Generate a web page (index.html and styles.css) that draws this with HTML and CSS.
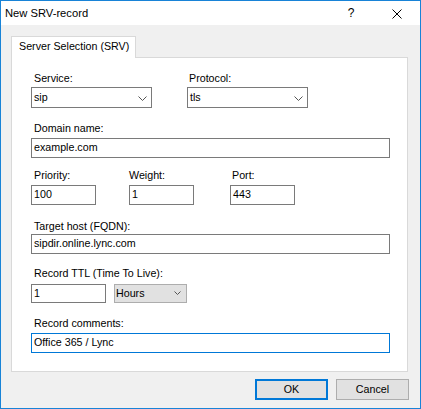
FILE: index.html
```html
<!DOCTYPE html>
<html>
<head>
<meta charset="utf-8">
<title>New SRV-record</title>
<link rel="stylesheet" href="styles.css">
</head>
<body>
<div class="window">
  <div class="titlebar">
    <span class="title">New SRV-record</span>
    <span class="help">?</span>
    <span class="close"><svg width="10" height="10" viewBox="0 0 10 10"><path d="M0.5 0.5L9.5 9.5M9.5 0.5L0.5 9.5" stroke="#000" stroke-width="1" fill="none"/></svg></span>
  </div>
  <div class="content">
    <div class="tab">Server Selection (SRV)</div>
    <div class="panel">
      <div class="group g-service">
        <div class="col w-combo">
          <div class="lbl">Service:</div>
          <div class="combo"><span>sip</span><svg class="chev" width="9" height="5" viewBox="0 0 9 5"><polyline points="0.5,0.5 4.5,4.5 8.5,0.5" stroke="#555" fill="none"/></svg></div>
        </div>
        <div class="col w-combo col-protocol">
          <div class="lbl lbl-2">Protocol:</div>
          <div class="combo"><span>tls</span><svg class="chev" width="9" height="5" viewBox="0 0 9 5"><polyline points="0.5,0.5 4.5,4.5 8.5,0.5" stroke="#555" fill="none"/></svg></div>
        </div>
      </div>
      <div class="group g-domain">
        <div class="col w-full">
          <div class="lbl">Domain name:</div>
          <div class="field">example.com</div>
        </div>
      </div>
      <div class="group g-prio">
        <div class="col w-small">
          <div class="lbl">Priority:</div>
          <div class="field">100</div>
        </div>
        <div class="col w-small col-weight">
          <div class="lbl lbl-0">Weight:</div>
          <div class="field">1</div>
        </div>
        <div class="col w-small col-port">
          <div class="lbl lbl-2">Port:</div>
          <div class="field">443</div>
        </div>
      </div>
      <div class="group g-target">
        <div class="col w-full">
          <div class="lbl">Target host (FQDN):</div>
          <div class="field">sipdir.online.lync.com</div>
        </div>
      </div>
      <div class="group g-ttl">
        <div class="col w-full">
          <div class="lbl">Record TTL (Time To Live):</div>
          <div class="ttl-row">
            <div class="field field-ttl">1</div>
            <div class="combo combo-flat"><span>Hours</span><svg class="chev" width="7" height="4" viewBox="0 0 7 4"><polyline points="0.5,0.5 3.5,3.5 6.5,0.5" stroke="#555" fill="none"/></svg></div>
          </div>
        </div>
      </div>
      <div class="group g-comments">
        <div class="col w-full">
          <div class="lbl">Record comments:</div>
          <div class="field field-focus">Office 365 / Lync</div>
        </div>
      </div>
    </div>
    <div class="buttons">
      <button class="btn btn-default">OK</button>
      <button class="btn">Cancel</button>
    </div>
  </div>
</div>
</body>
</html>
```
FILE: styles.css
```css
html, body {
  margin: 0;
  padding: 0;
}
body {
  font-family: "Liberation Sans", Arial, sans-serif;
  font-size: 10.7px;
  color: #000;
  background: #fff;
}
.window {
  width: 421px;
  height: 409px;
  box-sizing: border-box;
  border: 1px solid #1883d7;
  background: #f0f0f0;
  display: flex;
  flex-direction: column;
}
.titlebar {
  height: 24px;
  background: #fff;
  display: flex;
  align-items: flex-start;
  padding-left: 4px;
}
.title {
  font-size: 11.2px;
  line-height: 24px;
}
.help {
  margin-left: auto;
  width: 12px;
  text-align: center;
  font-size: 12px;
  line-height: 24px;
  margin-right: 35px;
}
.close {
  width: 10px;
  height: 10px;
  margin-top: 8px;
  margin-right: 18px;
  display: flex;
}
.content {
  padding: 11px 0 0 10px;
}
.tab {
  position: relative;
  z-index: 1;
  width: 125px;
  height: 22px;
  box-sizing: border-box;
  border: 1px solid #d9d9d9;
  border-bottom: none;
  background: #fff;
  padding-left: 7px;
  line-height: 19px;
  margin-bottom: -1px;
  white-space: nowrap;
}
.panel {
  width: 397px;
  box-sizing: border-box;
  border: 1px solid #d9d9d9;
  background: #fff;
  padding: 14px 17px 18px 19px;
}
.group {
  display: flex;
}
.col {
  display: flex;
  flex-direction: column;
}
.w-combo { width: 121px; }
.w-full { width: 359px; }
.w-small { width: 65px; }
.col-protocol { margin-left: 35px; }
.col-weight { margin-left: 33px; }
.col-port { margin-left: 36px; }

.lbl {
  height: 13px;
  line-height: 13px;
  padding-left: 3px;
  white-space: nowrap;
}
.lbl-2 { padding-left: 2px; }
.lbl-0 { padding-left: 0; }

.field {
  height: 20px;
  box-sizing: border-box;
  border: 1px solid #7a7a7a;
  background: #fff;
  padding-left: 2px;
  line-height: 17px;
  white-space: nowrap;
}
.field-focus {
  border-color: #0078d7;
}
.combo {
  height: 21px;
  box-sizing: border-box;
  border: 1px solid #7a7a7a;
  background: #fff;
  padding-left: 2px;
  line-height: 18px;
  display: flex;
  justify-content: space-between;
  align-items: flex-start;
}
.combo .chev {
  margin-top: 8px;
  margin-right: 4px;
}
.ttl-row {
  display: flex;
}
.field-ttl {
  width: 75px;
  height: 19px;
  line-height: 16px;
}
.combo-flat {
  width: 73px;
  height: 19px;
  margin-left: 8px;
  background: #e1e1e1;
  border-color: #adadad;
  padding-left: 1px;
  line-height: 17px;
}
.combo-flat .chev {
  margin-top: 6px;
  margin-right: 5px;
}

.g-service .combo { margin-top: 2px; }
.g-domain { margin-top: 14px; }
.g-domain .field { margin-top: 3px; }
.g-prio { margin-top: 11px; }
.g-prio .field { margin-top: 3px; }
.g-target { margin-top: 15px; }
.g-target .field { margin-top: 1px; }
.g-ttl { margin-top: 13px; }
.g-ttl .ttl-row { margin-top: 4px; }
.g-comments { margin-top: 14px; }
.g-comments .field { margin-top: 3px; }

.buttons {
  display: flex;
  justify-content: flex-end;
  gap: 8px;
  margin-top: 7px;
  padding-right: 11px;
}
.btn {
  width: 73px;
  height: 21px;
  box-sizing: border-box;
  margin: 0;
  padding: 0;
  background: #e1e1e1;
  border: 1px solid #adadad;
  border-radius: 0;
  font-family: inherit;
  font-size: 10.7px;
  color: #000;
  line-height: 17px;
}
.btn-default {
  border: 2px solid #0078d7;
}
```
